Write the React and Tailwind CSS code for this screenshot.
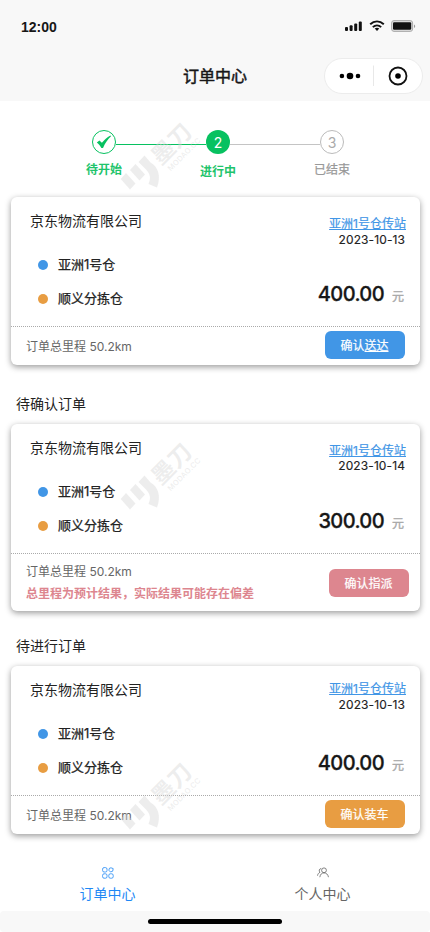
import React from 'react';

const orders = [
  {
    id: 1,
    company: '京东物流有限公司',
    station: '亚洲1号仓传站',
    date: '2023-10-13',
    price: '400.00',
    action: '确认送达',
    actionClass: 'bg-[#4196e6] mr-[15px] mb-[2px]',
    partUnderline: true,
    metaClass: 'pt-[18px]',
    dateClass: '-mt-px',
    footerClass: 'h-[38px]',
  },
  {
    id: 2,
    heading: '待确认订单',
    headingClass: 'h-[59px] pt-[29px]',
    company: '京东物流有限公司',
    station: '亚洲1号仓传站',
    date: '2023-10-14',
    price: '300.00',
    action: '确认指派',
    note: '总里程为预计结果，实际结果可能存在偏差',
    actionClass: 'bg-[#dd868f] mr-[11px]',
    metaClass: 'pt-[18px]',
    dateClass: '-mt-[2px]',
    footerClass: 'h-[57px]',
  },
  {
    id: 3,
    heading: '待进行订单',
    headingClass: 'h-[55px] pt-[25px]',
    company: '京东物流有限公司',
    station: '亚洲1号仓传站',
    date: '2023-10-13',
    price: '400.00',
    action: '确认装车',
    actionClass: 'bg-[#e89d42] mr-[15px] mb-[2px]',
    metaClass: 'pt-[14px]',
    dateClass: '-mt-px',
    footerClass: 'h-[38px]',
  },
];

function StatusBar() {
  return (
    <div className="flex h-[51px] items-center justify-between pr-[14px] pl-[21px]">
      <span className="mt-[3px] font-['Liberation_Sans'] text-[14px] font-bold leading-5 text-[#171717]">12:00</span>
      <svg className="mt-px" width="72" height="14" viewBox="0 0 72 14" fill="none">
        <g fill="#111">
          <rect x="1" y="8" width="3" height="4" rx="1" />
          <rect x="5.6" y="6.3" width="3" height="5.7" rx="1" />
          <rect x="10.2" y="4.5" width="3" height="7.5" rx="1" />
          <rect x="14.8" y="2.5" width="3" height="9.5" rx="1" />
        </g>
        <g stroke="#111" strokeWidth="1.9">
          <path d="M26.2 5.3c4-3.9 9.6-3.9 13.6 0" />
          <path d="M28.8 8.1c2.5-2.3 5.9-2.3 8.4 0" />
        </g>
        <path d="M33 12l-2.3-2.4c1.3-1.1 3.3-1.1 4.6 0z" fill="#111" />
        <rect x="47.6" y="1.6" width="21" height="10.8" rx="2.4" fill="#ddd" stroke="#aaa" />
        <rect x="49" y="3.3" width="18.2" height="7.4" rx="1.2" fill="#111" />
        <path d="M70 5.4c1.6.5 1.6 3 0 3.6z" fill="#999" />
      </svg>
    </div>
  );
}

function TitleBar() {
  return (
    <div className="flex h-[50px] items-center justify-end">
      <h1 className="mr-[2px] w-[214px] shrink-0 text-center text-[16px] leading-6 font-normal text-[#171717] [-webkit-text-stroke:0.5px]">
        订单中心
      </h1>
      <div className="mr-[7px] flex h-[36px] w-[99px] items-center rounded-full border border-[#ececec] bg-white">
        <svg width="97" height="34" viewBox="0 0 97 34">
          <circle cx="16.9" cy="17" r="2.3" />
          <circle cx="25" cy="17" r="3.3" />
          <circle cx="33" cy="17" r="2.3" />
          <path d="M48.500 6.500v20.500" stroke="#e8e8e8" />
          <circle cx="73" cy="17" r="8.500" fill="none" stroke="#111" strokeWidth="1.8" />
          <circle cx="73" cy="17" r="2.8" />
        </svg>
      </div>
    </div>
  );
}

function Steps() {
  return (
    <div className="h-[96px] pt-[29px]">
      <div className="flex items-center pl-[92px]">
        <div className="flex size-6 items-center justify-center rounded-full border border-[#07c160]">
          <svg width="16" height="14" viewBox="0 0 16 14" fill="#07c160">
            <path d="M.8 7.400l2.600-1.900 2.500 2.300C8.300 5 11 2.500 14.400.500l.6.800c-3 2.800-5.700 6.500-8 11.600H5.400C4.200 10.700 2.800 8.800.8 7.400z" />
          </svg>
        </div>
        <div className="mt-1 h-px w-[90px] bg-[#07c160]"></div>
        <div className="flex size-6 items-center justify-center rounded-full bg-[#07c160] text-[14px] text-white">2</div>
        <div className="mt-1 h-px w-[90px] bg-[#c4c4c4]"></div>
        <div className="flex size-6 items-center justify-center rounded-full border border-[#bbb] text-[14px] text-[#aaa]">3</div>
      </div>
      <div className="flex pt-[6px] pl-[47px] text-center text-[12px] leading-5">
        <span className="w-[114px] font-bold text-[#1fc46c]">待开始</span>
        <span className="mt-[2px] w-[114px] font-bold text-[#1fc46c]">进行中</span>
        <span className="w-[114px] text-[#999] [-webkit-text-stroke:0.25px]">已结束</span>
      </div>
    </div>
  );
}

function OrderCard({ order }) {
  return (
    <div className="ml-[11px] w-[409px]">
      <div className="rounded-[6px] bg-white shadow-[0_2px_6px_rgba(0,0,0,0.4)]">
        <div className="flex h-[129px] justify-between">
          <div className="pt-[12px] pl-[19px] text-[#222]">
            <h3 className="text-[14px] leading-6">{order.company}</h3>
            <div className="mt-[15px] ml-[8px] flex h-[34px] items-center gap-[10px] text-[13px] [-webkit-text-stroke:0.25px]">
              <span className="size-[10px] rounded-full bg-[#4196e6]"></span>
              <span className="mb-px">亚洲1号仓</span>
            </div>
            <div className="ml-[8px] flex h-[34px] items-center gap-[10px] text-[13px] [-webkit-text-stroke:0.25px]">
              <span className="size-[10px] rounded-full bg-[#e89d42]"></span>
              <span className="mb-px">顺义分拣仓</span>
            </div>
          </div>
          <div className={`flex flex-col pr-[14px] text-right text-[12px] ${order.metaClass}`}>
            <a className="leading-[17px] text-[#4196e6] underline [-webkit-text-stroke:0.2px]">{order.station}</a>
            <span className={`pr-px leading-[17px] tracking-[0.1px] text-[#222] [-webkit-text-stroke:0.15px] ${order.dateClass}`}>{order.date}</span>
            <div className="mt-auto mr-[2px] mb-[18px] flex items-baseline justify-end gap-[8px]">
              <span className="text-[20px] leading-7 font-medium tracking-[-0.6px] text-[#171717] [-webkit-text-stroke:0.3px]">{order.price}</span>
              <span className="text-[12px] text-[#aaa] [-webkit-text-stroke:0.4px]">元</span>
            </div>
          </div>
        </div>
        <svg className="block" width="409" height="1">
          <path d="M0 .5h409" stroke="#aaa" strokeDasharray="1 1" />
        </svg>
        <div className={`flex items-center justify-between pl-[15px] ${order.footerClass}`}>
          <div className="pt-px text-[12px] leading-[22px]">
            <p className="text-[#666]">订单总里程 50.2km</p>
            {order.note && <p className="font-bold text-[#dd868f]">{order.note}</p>}
          </div>
          <button className={`h-[28px] w-[80px] rounded-[6px] pt-[2px] pr-px text-[12px] text-white [-webkit-text-stroke:0.2px] ${order.actionClass}`}>
            {order.partUnderline ? <>确认<span className="underline">送达</span></> : order.action}
          </button>
        </div>
      </div>
    </div>
  );
}

function Watermark({ className }) {
  return (
    <svg
      className={`pointer-events-none absolute left-[120px] overflow-visible ${className}`}
      width="84"
      height="76"
      viewBox="0 0 84 76"
      fill="#d8d8d8"
      fillOpacity="0.45"
    >
      <path d="M6 54L15.500 64.500 10 70.500.7 60z" />
      <path d="M15.500 45L25 55.500 19.500 61.500 10 51z" />
      <path d="M24.500 36.500L30.500 43.500C38 47.500 41.500 57 37 68.500L28.500 65C31 59 30.500 55.500 26 50.500L18.500 43z" />
      <g transform="translate(43 49) rotate(-45)">
        <text x="0" y="-3" fontSize="23" fontWeight="bold">墨刀</text>
        <text x="3" y="8" fontSize="7.5" fontWeight="500" textLength="43">MODAO.CC</text>
      </g>
    </svg>
  );
}

function TabBar() {
  return (
    <nav className="flex h-[77px] text-[14px] leading-5">
      <a className="flex flex-1 flex-col items-center pt-[33px] text-[#1e88f5]">
        <svg width="12" height="12" viewBox="0 0 12 12" fill="none" stroke="currentColor" strokeWidth="0.8">
          <rect x=".6" y=".6" width="4.400" height="4.400" rx="1.500" />
          <rect x=".6" y="6.800" width="4.400" height="4.400" rx="1.500" />
          <rect x="6.800" y="6.800" width="4.400" height="4.400" rx="1.500" />
          <path d="M9 .8L11.200 1.600 10.700 4.200 8.500 5 6.800 3.200 7.500 1.200z" />
        </svg>
        <span className="mt-[5px]">订单中心</span>
      </a>
      <a className="flex flex-1 flex-col items-center pt-[33px] text-[#666]">
        <svg width="12" height="12" viewBox="0 0 12 12" fill="none" stroke="currentColor" strokeWidth="0.8">
          <circle cx="7" cy="3.300" r="2.400" />
          <path d="M2.800 10.200C3.300 7.300 4.700 5.900 7 5.900s3.900 1.400 4.500 4.300" />
          <path d="M4.200 1.500C2.200 1.600 1.500 4 3 5.300 1.600 5.900.8 7 .5 8.700" />
        </svg>
        <span className="mt-[5px]">个人中心</span>
      </a>
    </nav>
  );
}

export default function App() {
  return (
    <div className="relative h-[932px] w-[430px] overflow-hidden bg-white font-[Inter,'Noto_Sans_CJK_SC',sans-serif]">
      <header className="h-[101px] bg-[#f8f8f8]">
        <StatusBar />
        <TitleBar />
      </header>

      <Steps />

      {orders.map(order => (
        <section key={order.id}>
          {order.heading && (
            <h2 className={`pl-[16px] text-[14px] leading-5 text-[#222] ${order.headingClass}`}>{order.heading}</h2>
          )}
          <OrderCard order={order} />
        </section>
      ))}

      <TabBar />

      {/* Home indicator */}
      <div className="flex h-[21px] justify-center rounded-[4px] bg-[#f8f8f8] pt-[8px]">
        <div className="h-[5px] w-[134px] rounded-full bg-black"></div>
      </div>

      <Watermark className="top-[119px]" />
      <Watermark className="top-[439px]" />
      <Watermark className="top-[759px]" />
    </div>
  );
}
